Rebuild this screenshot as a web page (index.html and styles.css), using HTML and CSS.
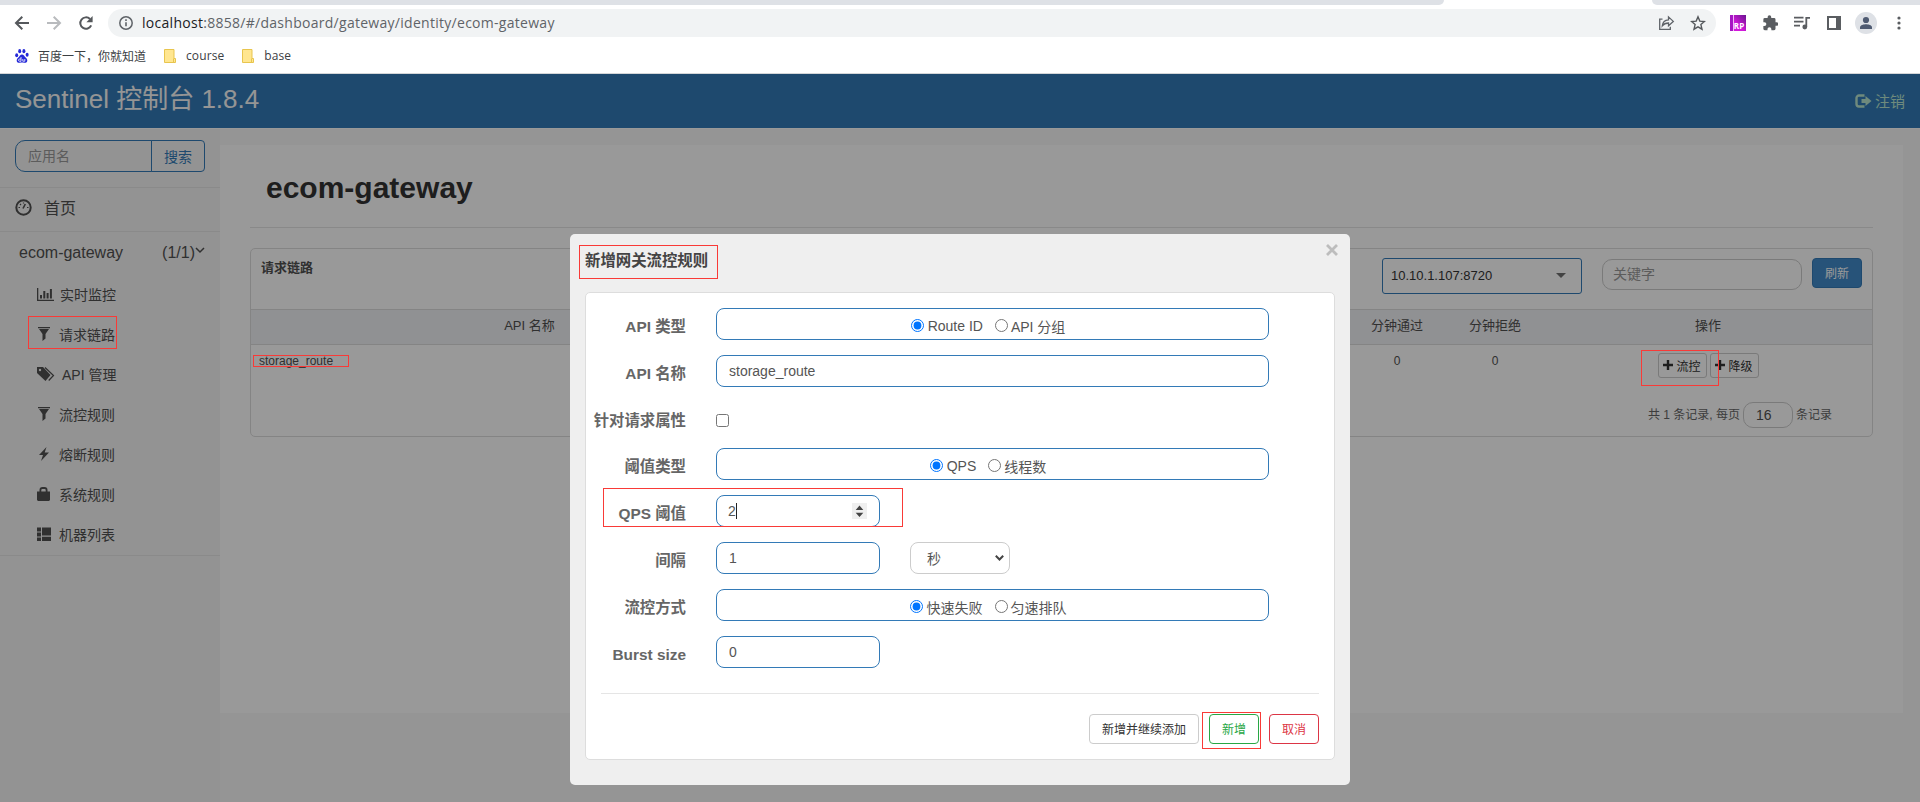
FILE: index.html
```html
<!DOCTYPE html>
<html lang="zh-CN">
<head>
    <meta charset="UTF-8">
    <meta name="viewport" content="width=device-width, initial-scale=1.0">
    <title>Sentinel 控制台</title>
    <link rel="stylesheet" href="styles.css">
</head>
<body>
    <!-- 浏览器工具栏 -->
    <div class="browser">
        <div class="tab-strip">
            <div class="tab-left"></div>
            <div class="tab-right"></div>
        </div>
        <div class="toolbar">
            <div class="nav-buttons">
                <svg width="16" height="16" viewBox="0 0 16 16" fill="none" stroke="#55585c" stroke-width="2"><path d="M15 8H2.5M8.3 1.8L2 8l6.3 6.2"/></svg>
                <svg width="16" height="16" viewBox="0 0 16 16" fill="none" stroke="#b9bbbe" stroke-width="2"><path d="M1 8h12.5M7.7 1.8L14 8l-6.3 6.2"/></svg>
                <svg width="16" height="16" viewBox="0 0 16 16"><path d="M13.2 10.4A5.7 5.7 0 1 1 12 4" fill="none" stroke="#55585c" stroke-width="2"/><path d="M14.6 1v6.2H8.4z" fill="#55585c"/></svg>
            </div>
            <div class="address-bar">
                <svg width="16" height="16" viewBox="0 0 16 16" fill="none" stroke="#5f6368"><circle cx="8" cy="8" r="6.2" stroke-width="1.5"/><path d="M8 7.2v4M8 4.3v1.6" stroke-width="1.6"/></svg>
                <span class="url"><b>localhost</b>:8858/#/dashboard/gateway/identity/ecom-gateway</span>
                <svg class="share" width="17" height="16" viewBox="0 0 17 16" fill="none" stroke="#5f6368" stroke-width="1.3"><path d="M4.500 4.200H1.700v10.100h10.600v-2.600"/><path d="M4.300 10.800C4.700 7 7 5 10.500 4.800V1.900L15.300 6.400l-4.800 4.300V8C7.800 8 5.800 8.800 4.300 10.800z"/></svg>
                <svg width="16" height="16" viewBox="0 0 16 16" fill="none" stroke="#55585c" stroke-width="1.4"><path d="M8 1.800l1.800 4.300 4.600.4-3.500 3.100 1.100 4.600L8 11.800l-4 2.400 1.100-4.600L1.600 6.500l4.600-.4z"/></svg>
            </div>
            <div class="extensions">
                <span class="ext-rp">RP</span>
                <svg width="15" height="16" viewBox="2 1 21 22" fill="#5a5d61"><path d="M21 11h-1.500V7a2 2 0 0 0-2-2h-4V3.500a2.500 2.500 0 0 0-5 0V5h-4a2 2 0 0 0-2 2v3.800H4a2.700 2.700 0 0 1 0 5.400H2.500V20a2 2 0 0 0 2 2h3.800v-1.500a2.700 2.700 0 0 1 5.400 0V22h3.800a2 2 0 0 0 2-2v-4H21a2.500 2.500 0 0 0 0-5z"/></svg>
                <svg width="16" height="14" viewBox="0 0 16 14"><path d="M0 1.600h9.500M0 5.600h9.500M0 9.600h6" stroke="#5a5d61" stroke-width="1.700"/><path d="M12.300 11V1.800H16" fill="none" stroke="#5a5d61" stroke-width="1.800"/><circle cx="10.800" cy="11" r="2.400" fill="#5a5d61"/></svg>
                <svg class="panel-icon" width="14" height="14" viewBox="0 0 14 14"><rect x="1" y="1" width="12" height="12" fill="#fff" stroke="#5a5d61" stroke-width="2"/><path d="M9 1h5v12H9z" fill="#5a5d61"/></svg>
                <svg class="avatar" width="22" height="22" viewBox="0 0 22 22"><circle cx="11" cy="11" r="11" fill="#dee1e6"/><circle cx="11" cy="8" r="3.100" fill="#4f5b72"/><path d="M5 17v-1.500C5 13 9 12.300 11 12.300s6 .7 6 3.200V17z" fill="#4f5b72"/></svg>
                <svg width="4" height="14" viewBox="0 0 4 14" fill="#5a5d61"><circle cx="2" cy="2" r="1.600"/><circle cx="2" cy="7" r="1.600"/><circle cx="2" cy="12" r="1.600"/></svg>
            </div>
        </div>
        <div class="bookmarks">
            <span class="bookmark">
                <svg width="14" height="14" viewBox="0 0 14 14" fill="#2529d8"><ellipse cx="1.700" cy="6.200" rx="1.500" ry="2"/><ellipse cx="4.700" cy="2.200" rx="1.500" ry="2.100"/><ellipse cx="8.900" cy="2.200" rx="1.500" ry="2.100"/><ellipse cx="12.100" cy="5.800" rx="1.500" ry="2"/><path d="M7 5.500c1.800 0 2.300 1.800 3.600 3 1.300 1.100 2 2.300 1.600 3.700-.5 1.600-2 1.700-3.200 1.500-1.300-.2-2.700-.2-4 0-1.200.2-2.800.1-3.200-1.500-.4-1.400.3-2.600 1.600-3.700C4.700 7.300 5.200 5.500 7 5.500z"/><path d="M6 8v4.300H4.700a1 1 0 0 1 0-2.300H6M7.800 10v2.200h2V10" fill="none" stroke="#fff" stroke-width=".8"/></svg>
                百度一下，你就知道
            </span>
            <span class="bookmark folder"><svg width="12" height="14" viewBox="0 0 12 14"><path d="M.5.500h9.500v9h1.500v4H.500z" fill="#ffe690" stroke="#e8c54e"/><path d="M9.500 13V9.500" stroke="#e8c54e"/></svg>course</span>
            <span class="bookmark folder"><svg width="12" height="14" viewBox="0 0 12 14"><path d="M.5.500h9.500v9h1.500v4H.500z" fill="#ffe690" stroke="#e8c54e"/><path d="M9.500 13V9.500" stroke="#e8c54e"/></svg>base</span>
        </div>
    </div>

    <div class="app">
        <header class="navbar">
            <span class="brand">Sentinel 控制台 1.8.4</span>
            <a class="logout">
                <svg width="17" height="14" viewBox="0 0 17 14"><path d="M9.500 1.500H4A2.500 2.500 0 0 0 1.500 4v6A2.500 2.500 0 0 0 4 12.500h5.500" fill="none" stroke="currentColor" stroke-width="2.400"/><path d="M6.500 5h4V2L16.500 7l-6 5V9h-4z" fill="currentColor"/></svg>
                <span>注销</span>
            </a>
        </header>

        <div class="layout">
            <aside class="sidebar">
                <div class="app-search">
                    <input type="text" placeholder="应用名">
                    <button>搜索</button>
                </div>
                <a class="menu-home">
                    <svg width="17" height="17" viewBox="0 0 17 17" fill="none" stroke="currentColor"><circle cx="8.500" cy="8.500" r="7.200" stroke-width="2"/><path d="M8 9.500L10.300 5" stroke-width="1.600"/><path d="M3.500 8.500H5M12 8.500h1.500M5 5l1 1M8.500 3.500v1" stroke-width="1.200"/></svg>
                    首页
                </a>
                <div class="menu-app">
                    <span>ecom-gateway</span>
                    <span class="count">(1/1)<svg width="10" height="7" viewBox="0 0 10 7" fill="none" stroke="currentColor" stroke-width="1.500"><path d="M1 1l4 4 4-4"/></svg></span>
                </div>
                <ul class="menu">
                    <li><svg width="17" height="14" viewBox="0 0 17 14" fill="currentColor"><path d="M0 1h1.300v11.700H17V14H0zM3 8h2v3.500H3zM6.300 4h2v7.500h-2zM9.600 6h2v5.500h-2zM12.900 2h2v9.500h-2z"/></svg>实时监控</li>
                    <li><svg class="narrow" width="14" height="14" viewBox="0 0 14 14" fill="currentColor"><path d="M1 0h12v1.200H1zM2 2h10L8.500 7v4.500l-3 2.500V7z"/></svg>请求链路</li>
                    <li><svg class="wide" width="18" height="14" viewBox="0 0 18 14"><path d="M0 0h6l7.500 8-5 6L0 6z" fill="currentColor"/><circle cx="3" cy="3" r="1.200" fill="#f5f5f5"/><path d="M8 .5l8.500 8-4.800 5" fill="none" stroke="currentColor" stroke-width="1.200"/></svg>API 管理</li>
                    <li><svg class="narrow" width="14" height="14" viewBox="0 0 14 14" fill="currentColor"><path d="M1 0h12v1.200H1zM2 2h10L8.500 7v4.500l-3 2.500V7z"/></svg>流控规则</li>
                    <li><svg class="narrow" width="14" height="14" viewBox="0 0 14 14" fill="currentColor"><path d="M9.500 0L2 8h4l-2 6 8-8.500H7.700z"/></svg>熔断规则</li>
                    <li><svg class="narrow" width="14" height="14" viewBox="0 0 14 14" fill="currentColor"><path d="M0 4.500h2.500V3A3 3 0 0 1 5.500 0h2a3 3 0 0 1 3 3v1.500H13V13l-1 1H1l-1-1zM4.300 4.500h4.400V3a1 1 0 0 0-1-1H5.300a1 1 0 0 0-1 1z"/></svg>系统规则</li>
                    <li><svg class="narrow" width="14" height="14" viewBox="0 0 14 14" fill="currentColor"><path d="M0 .5h4v4H0zM0 5.500h4v4H0zM0 10.500h4v3.500H0zM5 .500h9v8H5zM5 9.800h9V14H5z"/></svg>机器列表</li>
                </ul>
            </aside>

            <main class="content">
                <h1>ecom-gateway</h1>
                <section class="card">
                    <div class="card-header">
                        <span class="card-title">请求链路</span>
                        <div class="machine-select">10.10.1.107:8720<i class="caret"></i></div>
                        <input class="keyword" type="text" placeholder="关键字">
                        <button class="btn-refresh">刷新</button>
                    </div>
                    <div class="row thead">
                        <span>API 名称</span>
                        <span></span>
                        <span>分钟通过</span>
                        <span>分钟拒绝</span>
                        <span>操作</span>
                    </div>
                    <div class="row tbody">
                        <span class="resource">storage_route</span>
                        <span></span>
                        <span>0</span>
                        <span>0</span>
                        <span class="actions">
                            <button><svg width="10" height="10" viewBox="0 0 10 10"><path d="M5 0v10M0 5h10" stroke="currentColor" stroke-width="2.400"/></svg>流控</button>
                            <button><svg width="10" height="10" viewBox="0 0 10 10"><path d="M5 0v10M0 5h10" stroke="currentColor" stroke-width="2.400"/></svg>降级</button>
                        </span>
                    </div>
                    <div class="pager">
                        <span>共 1 条记录, 每页</span>
                        <input type="text" value="16">
                        <span>条记录</span>
                    </div>
                </section>
            </main>
        </div>

        <!-- 新增规则弹窗 -->
        <div class="backdrop">
            <div class="modal">
                <div class="modal-header">
                    <span class="modal-title">新增网关流控规则</span>
                    <svg class="close" width="12" height="12" viewBox="0 0 12 12"><path d="M1 1l10 10M11 1L1 11" stroke="#bdbdbd" stroke-width="2.800"/></svg>
                </div>
                <div class="modal-card">
                    <form class="rule-form">
                        <div class="form-row">
                            <label>API 类型</label>
                            <div class="field radios">
                                <label><input type="radio" name="api" checked>Route ID</label>
                                <label><input type="radio" name="api">API 分组</label>
                            </div>
                        </div>
                        <div class="form-row">
                            <label>API 名称</label>
                            <input class="field" type="text" value="storage_route">
                        </div>
                        <div class="form-row check-row">
                            <label>针对请求属性</label>
                            <input type="checkbox">
                        </div>
                        <div class="form-row">
                            <label>阈值类型</label>
                            <div class="field radios">
                                <label><input type="radio" name="grade" checked>QPS</label>
                                <label><input type="radio" name="grade">线程数</label>
                            </div>
                        </div>
                        <div class="form-row">
                            <label>QPS 阈值</label>
                            <div class="field short number">
                                <span class="typed">2</span>
                                <svg width="15" height="16" viewBox="0 0 15 16"><path d="M0 0h15v16H0z" fill="#efefef"/><path d="M7.500 2.500L11.300 7H3.700zM7.500 14L3.700 9.800h7.600z" fill="#444"/></svg>
                            </div>
                        </div>
                        <div class="form-row">
                            <label>间隔</label>
                            <input class="field short" type="text" value="1">
                            <div class="field unit">秒<svg width="9" height="6" viewBox="0 0 9 6"><path d="M.8 .8l3.700 3.700L8.200.8" fill="none" stroke="#444" stroke-width="2"/></svg></div>
                        </div>
                        <div class="form-row">
                            <label>流控方式</label>
                            <div class="field radios">
                                <label><input type="radio" name="mode" checked>快速失败</label>
                                <label><input type="radio" name="mode">匀速排队</label>
                            </div>
                        </div>
                        <div class="form-row">
                            <label>Burst size</label>
                            <input class="field short" type="text" value="0">
                        </div>
                    </form>
                    <div class="modal-footer">
                        <button class="btn">新增并继续添加</button>
                        <button class="btn btn-success">新增</button>
                        <button class="btn btn-danger">取消</button>
                    </div>
                </div>
            </div>
        </div>
    </div>

    <!-- 红框标注 -->
    <div class="mark mark-menu"></div>
    <div class="mark mark-resource"></div>
    <div class="mark mark-action"></div>
    <div class="mark mark-title"></div>
    <div class="mark mark-qps"></div>
    <div class="mark mark-submit"></div>
</body>
</html>
```

FILE: styles.css
```css
* {
    margin: 0;
    padding: 0;
    box-sizing: border-box;
}

body {
    position: relative;
    width: 1920px;
    height: 802px;
    overflow: hidden;
    font-family: "Liberation Sans", "Noto Sans CJK SC", sans-serif;
    font-size: 14px;
    color: #505050;
    background: #fff;
}

button,
input {
    font-family: inherit;
    color: inherit;
}

svg {
    flex: none;
}

/* 浏览器 */
.browser {
    height: 74px;
    font-family: "Open Sans", "Noto Sans CJK SC", sans-serif;
    border-bottom: 1px solid #d4d6d8;
}

.tab-strip {
    display: flex;
    justify-content: space-between;
    height: 5px;
}

.tab-left,
.tab-right {
    background: #dee1e6;
}

.tab-left {
    width: 1444px;
    border-bottom-right-radius: 6px;
}

.tab-right {
    width: 268px;
    border-bottom-left-radius: 6px;
}

.toolbar {
    display: flex;
    align-items: center;
    height: 36px;
}

.nav-buttons {
    display: flex;
    gap: 16px;
    width: 108px;
    padding-left: 14px;
}

.address-bar {
    display: flex;
    align-items: center;
    width: 1608px;
    height: 28px;
    padding: 0 10px;
    border-radius: 14px;
    background: #f1f3f4;
}

.url {
    flex: 1;
    margin-left: 8px;
    padding-bottom: 2px;
    font-size: 14px;
    letter-spacing: 0.28px;
    color: #5f6368;
}

.url b {
    font-weight: normal;
    color: #202124;
}

.share {
    margin-right: 15px;
}

.extensions {
    display: flex;
    align-items: center;
    gap: 16px;
    padding-left: 14px;
}

.ext-rp {
    width: 16px;
    height: 16px;
    margin-right: 1px;
    padding: 5px 0 0 2px;
    background: linear-gradient(90deg, #a616c4 3px, #f0b8f7 3px, #f0b8f7 4px, transparent 4px), linear-gradient(45deg, #d419dc 40%, #6b1590);
    color: #fff;
    font-size: 8px;
    font-weight: bold;
    line-height: 12px;
    text-align: center;
}

.panel-icon {
    margin-left: 1px;
}

.avatar {
    margin: 0 4px 0 -2px;
}

.bookmarks {
    display: flex;
    height: 30px;
    padding-left: 15px;
}

.bookmark {
    display: flex;
    align-items: center;
    gap: 9px;
    height: 29px;
    font-size: 12px;
    color: #3c4043;
}

.folder {
    gap: 10px;
    margin-left: 18px;
    letter-spacing: 0.1px;
}

/* 页面 */
.app {
    position: relative;
    height: 728px;
    background: #f8f8f8;
}

.navbar {
    display: flex;
    align-items: center;
    justify-content: space-between;
    height: 54px;
    padding: 0 15px;
    background: #337ab7;
}

.brand {
    padding-bottom: 9px;
    font-size: 26px;
    color: #f8f8f8;
}

.logout {
    display: flex;
    align-items: center;
    gap: 3px;
    font-size: 15px;
    color: #b9e6d0;
}

.logout span {
    padding-bottom: 2px;
}

.layout {
    display: flex;
    border-top: 1px solid #fff;
}

.sidebar {
    width: 220px;
    height: 673px;
    background: #f5f5f5;
}

.app-search {
    display: flex;
    height: 59px;
    padding: 11px 15px 15px;
    border-bottom: 1px solid #e7e7e7;
}

.app-search input {
    width: 137px;
    height: 32px;
    padding: 0 12px;
    border: 1px solid #337ab7;
    border-radius: 10px 0 0 10px;
    background: none;
    font-size: 14px;
}

input::placeholder {
    color: #999;
}

.app-search button {
    width: 54px;
    height: 32px;
    margin-left: -1px;
    border: 1px solid #337ab7;
    border-radius: 0 4px 4px 0;
    background: none;
    color: #337ab7;
    font-size: 14px;
}

.menu-home {
    display: flex;
    align-items: center;
    gap: 12px;
    height: 44px;
    padding: 0 15px 5px;
    border-bottom: 1px solid #e7e7e7;
    font-size: 16px;
}

.menu-app {
    display: flex;
    justify-content: space-between;
    height: 43px;
    padding: 0 15px 0 19px;
    font-size: 16px;
    line-height: 42px;
}

.count svg {
    margin-left: 0;
    vertical-align: 4px;
}

.menu {
    list-style: none;
    border-bottom: 1px solid #e7e7e7;
}

.menu li {
    display: flex;
    align-items: center;
    gap: 6px;
    height: 40px;
    padding: 0 0 2px 37px;
}

.menu .narrow {
    margin-right: 2px;
}

.menu .wide {
    margin-right: 1px;
}

.content {
    width: 1683px;
    height: 568px;
    margin-top: 16px;
    padding: 0 30px;
    background: #fff;
}

h1 {
    height: 83px;
    padding: 26px 16px 0;
    border-bottom: 1px solid #e4e4e4;
    font-size: 30px;
    line-height: 34px;
    color: #333;
}

.card {
    height: 189px;
    margin-top: 20px;
    border: 1px solid #ddd;
    border-radius: 5px;
}

.card-header {
    display: flex;
    height: 60px;
    padding: 9px 10px;
}

.card-title {
    flex: 1;
    font-size: 13px;
    font-weight: bold;
    line-height: 19px;
}

.machine-select {
    display: flex;
    align-items: center;
    justify-content: space-between;
    width: 200px;
    height: 36px;
    padding: 0 15px 2px 8px;
    border: 1px solid #337ab7;
    border-radius: 3px;
    font-size: 13px;
    color: #333;
}

.caret {
    border: 5px solid transparent;
    border-top-color: #707070;
    border-bottom-width: 0;
}

.keyword {
    width: 200px;
    height: 31px;
    margin: 1px 10px 0 20px;
    padding: 0 10px 1px;
    border: 1px solid #ccc;
    border-radius: 10px;
    font-size: 14px;
}

.btn-refresh {
    width: 50px;
    height: 30px;
    padding-bottom: 2px;
    border: 1px solid #337ab7;
    border-radius: 4px;
    background: #428bca;
    color: #fff;
    font-size: 12px;
}

.row {
    display: grid;
    grid-template-columns: 557px 1fr 98px 98px 328px;
    text-align: center;
}

.thead {
    height: 36px;
    border: solid #ddd;
    border-width: 1px 0;
    background: #f0f2f5;
    font-size: 13px;
    line-height: 32px;
}

.tbody {
    height: 49px;
    padding-top: 8px;
    font-size: 12px;
    line-height: 16px;
}

.resource {
    padding-left: 8px;
    text-align: left;
}

.actions {
    display: flex;
    justify-content: center;
    gap: 3px;
}

.actions button {
    display: flex;
    align-items: center;
    justify-content: center;
    gap: 3px;
    width: 49px;
    height: 25px;
    padding-bottom: 1px;
    border: 1px solid #ccc;
    border-radius: 3px;
    background: #fff;
    color: #333;
    font-size: 12px;
}

.pager {
    display: flex;
    align-items: center;
    justify-content: flex-end;
    gap: 3px;
    padding: 8px 40px 0 0;
    font-size: 12px;
    color: #666;
}

.pager span {
    padding-bottom: 3px;
}

.pager input {
    width: 50px;
    height: 26px;
    padding-left: 12px;
    border: 1px solid #ccc;
    border-radius: 10px;
    color: #505050;
    font-size: 14px;
}

/* 弹窗 */
.backdrop {
    position: absolute;
    inset: 0;
    padding-top: 160px;
    background: rgba(0, 0, 0, 0.4);
}

.modal {
    width: 780px;
    height: 551px;
    margin: 0 auto;
    padding: 0 15px;
    border-radius: 5px;
    background: #efefef;
}

.modal-header {
    display: flex;
    justify-content: space-between;
    height: 58px;
    padding-top: 10px;
}

.modal-title {
    font-size: 15.4px;
    font-weight: bold;
    line-height: 34px;
    color: #444;
}

.close {
    margin-right: -3px;
}

.modal-card {
    height: 468px;
    padding: 0 15px;
    border: 1px solid #ddd;
    border-radius: 5px;
    background: #fff;
}

.rule-form {
    height: 401px;
    padding: 15px 0 0;
    border-bottom: 1px solid #e5e5e5;
}

.form-row {
    display: flex;
    height: 47px;
}

.form-row > label {
    width: 100px;
    margin: 2px 30px 0 -15px;
    font-size: 15.4px;
    font-weight: bold;
    line-height: 34px;
    text-align: right;
    color: #666;
}

.check-row {
    height: 46px;
}

.check-row input {
    width: 13px;
    height: 13px;
    margin-top: 12px;
}

.field {
    display: flex;
    align-items: center;
    width: 553px;
    height: 32px;
    padding: 0 12px;
    border: 1px solid #337ab7;
    border-radius: 8px;
    background: #fff;
    font-size: 14px;
    color: #555;
}

.short {
    width: 164px;
}

.radios {
    justify-content: center;
    padding: 4px 9px 0 0;
    gap: 12px;
}

.radios label {
    display: flex;
    align-items: center;
}

.radios input {
    width: 13px;
    height: 13px;
    margin: -2px 4px 0 0;
}

.radios label + label input {
    margin-right: 3px;
}

.number {
    justify-content: space-between;
}

.typed {
    margin-left: -1px;
    border-right: 1px solid #222;
}

.unit {
    justify-content: space-between;
    width: 100px;
    margin-left: 30px;
    padding: 0 5px 1px 16px;
    border-color: #ccc;
}

.modal-footer {
    display: flex;
    justify-content: flex-end;
    gap: 10px;
    padding-top: 20px;
}

.btn {
    height: 30px;
    padding: 0 12px 2px;
    border: 1px solid #ccc;
    border-radius: 4px;
    background: #fff;
    color: #333;
    font-size: 12px;
}

.btn-success {
    border-color: #28a745;
    color: #28a745;
}

.btn-danger {
    border-color: #dc3545;
    color: #dc3545;
}

/* 标注框 */
.mark {
    position: absolute;
    border: 1px solid #f93a37;
}

.mark-menu {
    left: 28px;
    top: 316px;
    width: 89px;
    height: 33px;
}

.mark-resource {
    left: 253px;
    top: 355px;
    width: 96px;
    height: 12px;
}

.mark-action {
    left: 1641px;
    top: 350px;
    width: 78px;
    height: 36px;
}

.mark-title {
    left: 579px;
    top: 245px;
    width: 139px;
    height: 34px;
}

.mark-qps {
    left: 603px;
    top: 488px;
    width: 300px;
    height: 39px;
}

.mark-submit {
    left: 1202px;
    top: 712px;
    width: 59px;
    height: 37px;
}
```
